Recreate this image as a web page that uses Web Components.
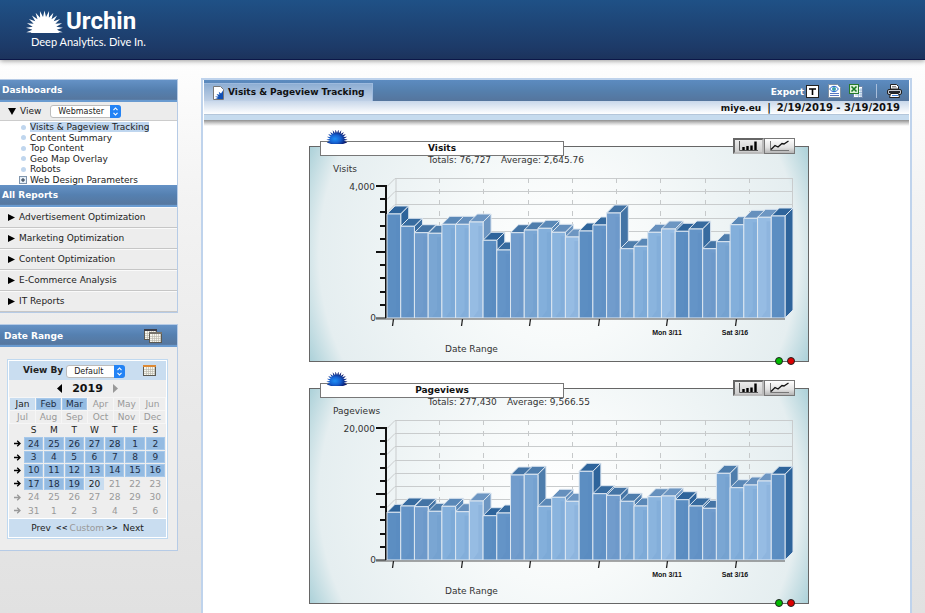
<!DOCTYPE html>
<html lang="en">
<head>
<meta charset="utf-8">
<title>Urchin - Visits &amp; Pageview Tracking</title>
<style>
html { height: 100%; }
body {
  margin: 0; min-height: 100%; overflow: hidden; height: 100%;
  font: 9px/11px "DejaVu Sans", Verdana, sans-serif; color: #222;
  background: linear-gradient(#fefefe 60px, #f3f3f3 200px, #e9e9e9 400px, #e1e1e1);
  --bar: linear-gradient(#6592c6, #5580b0 45%, #56779f 88%, #6a9bd0 92%);
}
.page { display: flex; align-items: stretch; gap: 23px; padding: 18px 13px 0 0; }
.side { flex: 0 0 178px; display: flex; flex-direction: column; gap: 11px; padding-top: 1px; }
.main { flex: 1; min-width: 600px; }
</style>
</head>
<body>
<urchin-masthead></urchin-masthead>
<div class="page">
  <div class="side">
    <urchin-nav></urchin-nav>
    <urchin-daterange></urchin-daterange>
  </div>
  <urchin-report class="main" heading="Visits &amp; Pageview Tracking" site="miye.eu" range="2/19/2019 - 3/19/2019">
    <urchin-chart heading="Visits" total="76,727" average="2,645.76" max="4000"
      values="3152,2779,2585,2567,2839,2839,2909,2355,2061,2585,2667,2718,2597,2455,2636,2818,3182,2100,2173,2597,2697,2627,2697,2100,2312,2827,3021,3052,3091"></urchin-chart>
    <urchin-chart heading="Pageviews" total="277,430" average="9,566.55" max="20000"
      values="7227,8182,8076,7379,8136,7318,8939,6712,7121,12879,12985,8136,9500,8894,13439,10045,9803,8894,8182,9591,9697,9136,8182,7833,13136,10955,11364,11970,12985"></urchin-chart>
  </urchin-report>
</div>

<script>
class Base extends HTMLElement {
  connectedCallback() {
    if (this.shadowRoot) return;
    this.attachShadow({ mode: 'open' }).innerHTML =
      '<style>:host,*{box-sizing:border-box}button{font:inherit;color:inherit;background:none;border:0;padding:0;margin:0;display:block}a{color:inherit;text-decoration:none}svg{display:block}' +
      this.css() + '</style>' + this.html();
  }
}

/* Rising sun with pointed rays around (cx, cy); dip is how far the rays reach below the horizon, in radians */
function sun(cx, cy, inner, outer, rays, dip) {
  const pts = [];
  const n = rays * 2;
  for (let i = 0; i <= n; i++) {
    const a = Math.PI - dip + (Math.PI + 2 * dip) * i / n;
    const r = i % 2 ? inner : outer;
    pts.push((cx + r * Math.cos(a)).toFixed(2) + ',' + (cy + r * Math.sin(a)).toFixed(2));
  }
  return pts.join(' ');
}

customElements.define('urchin-masthead', class extends Base {
  css() { return `
    :host { display: block; height: 60px; padding: 8px 0 0 26px; color: #fff;
      background: linear-gradient(#1f5186, #1d3a68 80%, #1c335c); border-bottom: 1px solid #0c1748;
      box-shadow: 0 1px 5px #999; }
    a { display: inline-block; }
    .brand { display: flex; align-items: flex-end; gap: 2px; height: 26px; }
    .name { font: 700 24px/24px Roboto, "Open Sans", sans-serif; margin-bottom: 1px; }
    .brand svg { margin-bottom: 1px; }
    .tag { font: 11px/13px Lato, "Open Sans", sans-serif; padding: 1px 0 0 5px; white-space: nowrap; }`; }
  html() { return `<a href="#"><div class="brand">
    <svg width="38" height="24" viewBox="0 0 38 24" fill="#fff"><polygon points="${sun(18.5, 20, 12, 18.5, 14, .18)} 18.5,24"/><path d="M7 18h23l3 6H5z"/></svg>
    <span class="name">Urchin</span></div><div class="tag">Deep Analytics. Dive In.</div></a>`; }
});

customElements.define('urchin-select', class extends Base {
  css() { return `
    :host { display: inline-grid; position: relative; height: 13px; }
    select { appearance: none; font: 8px/11px "DejaVu Sans", sans-serif; color: #222; border: 1px solid #bcbcbc;
      border-radius: 3px; background: #fff; padding: 0 14px 0 7px; margin: 0; width: 100%; height: 13px; }
    svg { position: absolute; right: 0; top: 0; pointer-events: none; }`; }
  html() { return `<select aria-label="${this.getAttribute('label')}"><option>${this.getAttribute('value')}</option></select>
    <svg width="11" height="13"><path d="M0 0h8q3 0 3 3v7q0 3-3 3H0z" fill="#2383f5"/><path d="M3.5 5.2l2-2.2 2 2.2M3.5 7.8l2 2.2 2-2.2" fill="none" stroke="#fff" stroke-width="1.1"/></svg>`; }
});

customElements.define('urchin-nav', class extends Base {
  css() { return `
    :host { display: block; border: solid #b6cbe6; border-width: 1px 1px 1px 0; background: #ededed; }
    h2 { margin: 0; font: bold 9px/21px "DejaVu Sans", sans-serif; color: #fff; background: var(--bar); padding-left: 2px; height: 22px; }
    .view { display: flex; align-items: center; gap: 4px; height: 19px; padding-left: 8px; border-bottom: 1px solid #ccc; background: #ececec; }
    .view urchin-select { width: 71px; margin-left: 5px; }
    .boards { list-style: none; margin: 0; padding: 1px 0 0 19px; background: #fff; height: 64px; display: grid; align-content: space-between; }
    .boards li { display: flex; align-items: center; gap: 4px; height: 10px; }
    .boards i { width: 5px; height: 5px; border-radius: 50%; background: #c0d6ee; margin-left: 2px; }
    .boards svg { margin-right: -1px; }
    .boards .on { background: #bfd6ef; }
    .boards a { line-height: 10px; }
    .reports { list-style: none; margin: 0; padding: 0; }
    .reports a { display: flex; align-items: center; gap: 4px; height: 21px; padding-left: 8px; border-top: 1px solid #fafafa; border-bottom: 1px solid #c6c6c6; }`; }
  html() {
    const dash = ['Visits &amp; Pageview Tracking', 'Content Summary', 'Top Content', 'Geo Map Overlay', 'Robots'];
    const rep = ['Advertisement Optimization', 'Marketing Optimization', 'Content Optimization', 'E-Commerce Analysis', 'IT Reports'];
    return `<h2>Dashboards</h2>
    <div class="view"><svg width="8" height="7"><path d="M0 0h8L4 7z"/></svg><span>View</span><urchin-select label="View" value="Webmaster"></urchin-select></div>
    <ul class="boards">${dash.map((d, i) => `<li><i></i><a href="#" class="${i ? '' : 'on'}">${d}</a></li>`).join('')}
      <li><svg width="8" height="8"><rect x=".5" y=".5" width="7" height="7" fill="#e8f0f8" stroke="#7f95ad"/><path d="M2 4h4M4 2v4" stroke="#234"/></svg><a href="#">Web Design Parameters</a></li></ul>
    <h2>All Reports</h2>
    <ul class="reports">${rep.map(r => `<li><a href="#"><svg width="7" height="7"><path d="M0 0l7 3.5L0 7z"/></svg>${r}</a></li>`).join('')}</ul>`;
  }
});

const gridIcon = (x, y, w, h, top) => {
  let s = `<rect x="${x + .5}" y="${y + .5}" width="${w - 1}" height="${h - 1}" fill="#f6f6ee" stroke="#5c5a52"/>`;
  for (let i = 3; i < w - 1; i += 2) s += `<path d="M${x + i + .5} ${y + 2}v${h - 3}" stroke="#b5b3a8" stroke-width=".6"/>`;
  for (let i = 4; i < h - 1; i += 2) s += `<path d="M${x + 1} ${y + i + .5}h${w - 2}" stroke="#b5b3a8" stroke-width=".6"/>`;
  return s + `<rect x="${x}" y="${y}" width="${w}" height="2" fill="${top}"/>`;
};

customElements.define('urchin-daterange', class extends Base {
  css() { return `
    :host { display: block; border: solid #b6cbe6; border-width: 1px 1px 1px 0; background: #ededed; }
    header { display: flex; justify-content: space-between; height: 22px; background: var(--bar); color: #fff; padding: 2px 15px 0 4px; }
    h2 { margin: 0; font: bold 9px/18px "DejaVu Sans", sans-serif; }
    .cal { margin: 12px 9px 11px 7px; border: 1px solid #c0d9f0; padding: 1px; background: #fff; }
    .by { display: flex; align-items: center; height: 19px; background: #c9ddf0; padding: 0 10px 0 14px; font-weight: bold; }
    .by urchin-select { width: 59px; margin: 1px auto 0 3px; }
    .year { display: flex; align-items: center; justify-content: center; gap: 10px; height: 17px; font: bold 11px/17px "DejaVu Sans", sans-serif; color: #111; background: #eee; }
    table { width: 100%; table-layout: fixed; border-collapse: separate; border-spacing: 1px; background: #eee; }
    td, th { padding: 0; font-weight: normal; text-align: center; }
    td button { width: 100%; text-align: center; line-height: 12px; }
    .months { height: 27px; background: #f6f6f6; }
    .months td { background: #eee; }
    .days { height: 94px; }
    .days .w { width: 13px; }
    .days .w svg { margin: 0 auto; }
    .s, .months .s { background: #94bbe2; outline: 1px solid #a6c8ea; outline-offset: -1px; color: #1d2d44; }
    .t, .months .t { background: #c9ddf0; }
    .d { color: #999; }
    footer { display: flex; justify-content: center; gap: 3px; height: 19px; align-items: center; background: #c9ddf0; border-top: 1px solid #fff; }
    footer .jump { font-size: 7px; font-weight: bold; }
    footer .end { margin: 0 2px; }
    footer .d { margin: 0 -1px; }`; }
  html() {
    const m = 'Jan Feb Mar Apr May Jun Jul Aug Sep Oct Nov Dec'.split(' ');
    const mc = i => i === 0 ? 't' : i < 3 ? 's' : 'd';
    const mrow = k => '<tr>' + m.slice(k, k + 6).map((x, i) => `<td class="${mc(i + k)}"><button type="button">${x}</button></td>`).join('') + '</tr>';
    const days = [24,25,26,27,28];
    for (let i = 1; i <= 31; i++) days.push(i);
    for (let i = 1; i <= 6; i++) days.push(i);
    let rows = '';
    for (let r = 0; r < 6; r++) {
      rows += `<tr><td class="w"><button type="button" aria-label="Week ${r + 1}"><svg width="8" height="7" fill="none" stroke="${r < 4 ? '#000' : '#999'}" stroke-width="1.3"><path d="M1 3.5h6M4.2 .8L7 3.5 4.2 6.2"/></svg></button></td>`;
      for (let c = 0; c < 7; c++) {
        const i = r * 7 + c;
        rows += `<td class="${i < 24 ? 's' : i === 24 ? 't' : 'd'}"><button type="button">${days[i]}</button></td>`;
      }
      rows += '</tr>';
    }
    return `<header><h2>Date Range</h2><svg width="18" height="17">${gridIcon(0, 2, 13, 11, '#3b3d48')}${gridIcon(5, 5, 13, 11, '#77746c')}</svg></header>
    <div class="cal">
      <div class="by"><span>View By</span><urchin-select label="View By" value="Default"></urchin-select><svg width="13" height="13">${gridIcon(0, 1, 13, 11, '#dd8a35')}</svg></div>
      <div class="year"><button type="button" aria-label="Previous year"><svg width="5" height="9"><path d="M5 0v9L0 4.5z"/></svg></button><span>2019</span><button type="button" aria-label="Next year"><svg width="5" height="9"><path d="M0 0v9l5-4.5z" fill="#999"/></svg></button></div>
      <table class="months">${mrow(0)}${mrow(6)}</table>
      <table class="days"><tr><th class="w"></th>${'SMTWTFS'.split('').map(x => `<th>${x}</th>`).join('')}</tr>${rows}</table>
      <footer><a href="#" class="end">Prev</a><a href="#" class="jump">&lt;&lt;</a><span class="d">Custom</span><a href="#" class="jump">&gt;&gt;</a><a href="#" class="end">Next</a></footer>
    </div>`;
  }
});

customElements.define('urchin-report', class extends Base {
  css() { return `
    :host { display: block; border: 2px solid #bfd3ec; border-bottom: 0; background: #fff; padding: 0 1px; }
    .top { background: linear-gradient(#5c8bc0, #5580ae 50%, #55759d); height: 21px; display: flex; justify-content: space-between; padding-top: 3px; }
    .tab { display: flex; align-items: center; gap: 4px; height: 18px; padding: 0 7px 0 9px; background: linear-gradient(#8eaed3, #bfd0e6); color: #111;
      border: 1px solid #9dbade; border-width: 1px 1px 0 0; font: bold 9px/17px "DejaVu Sans", sans-serif; margin: 0; }
    .tools { display: flex; align-items: center; padding: 0 7px 2px 0; height: 18px; color: #fff; font-weight: bold; gap: 2px; }
    .tools span { margin-top: 2px; }
    .tools button + button { margin-left: 5px; }
    .tools i { width: 1px; height: 14px; background: #a9bedb; margin: 0 8px 0 10px; }
    .sub { height: 13px; padding-right: 9px; text-align: right; background: linear-gradient(#c8d7ea, #fff); font: bold 10px/14px "DejaVu Sans", sans-serif; color: #111; }
    .sub b { font-size: 9px; } .sub u { text-decoration: none; margin: 0 6px; }
    .strip { height: 6px; background: #c6dbee; border-top: 1px solid #b4c6da; }
    .shade { height: 6px; background: linear-gradient(#8f8f8f, #ccc 50%, #fff); }
    .charts { display: flex; flex-direction: column; align-items: center; gap: 26px; padding: 20px 0 16px 5px; }`; }
  html() { return `
    <div class="top"><h1 class="tab"><svg width="11" height="14"><path d="M.5 .5h7l3 3v10H.5z" fill="#fff" stroke="#777"/><path d="M10 4.5v8.500H2l3-1-3-1.500 3.500 0-2-2.500 3 .8-.8-3 2.300 1.800z" fill="#0f4fb5"/></svg>${this.getAttribute('heading').replace('&', '&amp;')}</h1>
      <div class="tools"><span>Export</span>
        <button type="button" aria-label="Text"><svg width="13" height="13"><rect x=".5" y=".5" width="12" height="12" fill="#fff" stroke="#222"/><path d="M3 4h7M6.5 4v6" stroke="#000" stroke-width="1.6"/></svg></button>
        <button type="button" aria-label="Document"><svg width="16" height="14"><path d="M2.500 .5h9l3 3v10h-12z" fill="#fff" stroke="#8090a0"/><path d="M4 9.500h9M4 11.500h9" stroke="#5878c0"/><path d="M3.500 5q4.500-5.500 9 0-4.500 5.500-9 0z" fill="#fff" stroke="#1c61d2"/><circle cx="8" cy="5" r="2" fill="#3aa0a8"/></svg></button>
        <button type="button" aria-label="Spreadsheet"><svg width="15" height="14"><path d="M4.500 2.500h9v11h-9z" fill="#fff" stroke="#6d86ad"/><path d="M6 6h7M6 8.500h7M6 11h7M9.500 4v9M12 4v9" stroke="#8fb2d6" stroke-width=".8"/><rect x=".5" y=".5" width="9" height="9" fill="#dcefd8" stroke="#277a2c"/><path d="M2.500 2.500l5 5M7.500 2.500l-5 5" stroke="#187a22" stroke-width="1.6"/></svg></button>
        <i></i><button type="button" aria-label="Print"><svg width="15" height="14"><path d="M3.500 5V.5h6l2 2V5z" fill="#fff" stroke="#222"/><path d="M5 2.500h4M5 4h5" stroke="#888"/><rect x=".5" y="5.500" width="14" height="5" rx="1.5" fill="#c9ccd2" stroke="#222"/><path d="M2 8h11" stroke="#23262c" stroke-width="2"/><path d="M3.500 9.500h8l1 4h-10z" fill="#fff" stroke="#222"/><path d="M5 11.500h6" stroke="#3e7fd8"/></svg></button>
      </div></div>
    <div class="sub"><b>${this.getAttribute('site')}</b><u>|</u>${this.getAttribute('range')}</div>
    <div class="strip"></div><div class="shade"></div>
    <div class="charts"><slot></slot></div>`; }
});

customElements.define('urchin-chart', class extends Base {
  css() { return `
    :host { display: block; position: relative; width: 100%; max-width: 500px; border: 1px solid #666;
      background: radial-gradient(circle at 50% 50%, #fff 0, #f7fafa 90px, #e5eef0 240px, #aad0d8 272px); }
    .plot { width: 100%; height: auto; }
    h3 { position: absolute; left: 10px; top: -6px; width: 244px; height: 15px; margin: 0; border: 1px solid #777; background: #fff;
      text-align: center; font: bold 9px/13px "DejaVu Sans", sans-serif; color: #111; }
    .sun { position: absolute; left: 16px; top: -17px; }
    .modes { position: absolute; right: 13px; top: -9px; display: flex; }
    .modes button { width: 31px; height: 16px; border: 1px solid #777; background: linear-gradient(#fff, #e2e2e2 60%, #b5b5b5); padding: 1px 4px; }
    .modes .on { border: 2px solid #999; border-color: #666 #bbb #bbb #666; padding: 0 3px; background: linear-gradient(#ececec, #ccc); }
    .leds { position: absolute; right: 13px; bottom: -4px; display: flex; gap: 4px; }
    .leds i { width: 8px; height: 8px; border-radius: 50%; border: 1px solid #222; background: #0b0; }
    .leds i + i { background: #d00; }
    text { font: 9px "DejaVu Sans", sans-serif; fill: #333; }
    .tick { font: bold 7px "Liberation Sans", Arial, sans-serif; fill: #111; text-anchor: middle; }`; }
  html() {
    const vals = this.getAttribute('values').split(',').map(Number);
    const max = +this.getAttribute('max');
    const name = this.getAttribute('heading');
    const x0 = 77, base = 171, H = 132, W = 398, dx = 8, dy = 8, step = W / vals.length;
    const front = ['#5c8ec2', '#6494c7', '#719ccc', '#7aa6d3', '#83afdb', '#8ab4de', '#96bce3'];
    const top = ['#2e649b', '#376b9f', '#4474a5', '#4e7dac', '#5a88b7', '#6690bd', '#6d96c2'];
    let s = '';
    for (let k = 0; k <= 10; k++) {
      const y = Math.round(base - dy - H * k / 10) + .5;
      s += `<path d="M${x0} ${y + dy}L${x0 + dx} ${y}H${x0 + W + dx}" fill="none" stroke="#c9cccd"/>`;
    }
    s += `<path d="M${x0 + dx + 1} ${base - dy - H}v${H}M${x0 + W + dx - .5} ${base - dy - H}v${H}" stroke="#c9cccd"/>`;
    for (let k = 1; k < 9; k++) s += `<path d="M${Math.round(x0 + dx + W * k / 9) + .5} ${base - dy - H}v${H}" stroke="#c6c9ca" stroke-dasharray="5 6"/>`;
    for (let k = 0; k <= 10; k++) {
      const y = Math.round(base - H * k / 10);
      s += `<path d="M${k % 5 ? 70 : 66} ${y}H76" stroke="#111" stroke-width="${k ? 2 : 1}"/>`;
    }
    s += `<path d="M76 ${base - H - 1}V${base}" stroke="#111" stroke-width="2"/>`;
    vals.forEach((v, i) => {
      const h = H * v / max, x = x0 + step * i, y = base - h, c = i % 7;
      const next = vals[i + 1];
      s += `<g stroke="#dce6f0" stroke-width="1" stroke-linejoin="round">
        <polygon points="${x},${y} ${x + dx},${y - dy} ${x + dx + step},${y - dy} ${x + step},${y}" fill="${top[c]}"/>`;
      if (next === undefined || next < v)
        s += `<polygon points="${x + step},${y} ${x + step + dx},${y - dy} ${x + step + dx},${base - dy} ${x + step},${base}" fill="${top[c]}"/>`;
      s += `<rect x="${x}" y="${y}" width="${step}" height="${h}" fill="${front[c]}"/></g>
        <path d="M${x + 4} ${base - 1}l5-7V${y + 4}h4V${base - 1}z" fill="#4e83bd" opacity=".1"/>`;
    });
    s += `<path d="M66 ${base + 1}H${x0 + W}" stroke="#555"/>`;
    for (let k = 0; k < 6; k++) {
      const x = 83 + Math.round(step * 5 * k);
      s += `<path d="M${x + .5} ${base + 1}l-1 7" stroke="#222" stroke-width="1.3"/>`;
    }
    return `<svg class="plot" viewBox="0 0 498 214">
      <text x="118" y="16">Totals: ${this.getAttribute('total')}</text><text x="${name === 'Visits' ? 191 : 197}" y="16">Average: ${this.getAttribute('average')}</text>
      <text x="23" y="25">${name}</text>
      <text x="65" y="43" text-anchor="end">${max.toLocaleString('en-US')}</text><text x="66" y="174" text-anchor="end">0</text>${s}
      <text class="tick" x="357" y="188">Mon 3/11</text><text class="tick" x="425" y="188">Sat 3/16</text>
      <text x="135" y="205">Date Range</text></svg>
    <h3>${name}</h3>
    <svg class="sun" width="22" height="14"><defs><radialGradient id="g" cx=".4" cy=".65" r=".55"><stop stop-color="#1f90f5"/><stop offset=".5" stop-color="#1560d0"/><stop offset="1" stop-color="#0a1668"/></radialGradient></defs><polygon points="${sun(11, 10, 7, 10.6, 13, .25)} 17,14 5,14" fill="url(#g)"/></svg>
    <div class="modes"><button type="button" class="on" aria-label="Bar graph"><svg width="21" height="12"><path d="M1.500 1v9.500H20" fill="none" stroke="#555"/><path d="M5.500 7v3M9.500 6v4M13.500 5.500v4.500M17.500 1.500V10" stroke="#000" stroke-width="2.4"/></svg></button><button type="button" aria-label="Line graph"><svg width="21" height="12"><path d="M1.500 1v9.500H20" fill="none" stroke="#777"/><path d="M2 9.500l4-4 3 1.500 4-3.500 2 .5 4.500-3" fill="none" stroke="#111" stroke-width="1.3"/></svg></button></div>
    <div class="leds"><i></i><i></i></div>`;
  }
});
</script>
</body>
</html>
